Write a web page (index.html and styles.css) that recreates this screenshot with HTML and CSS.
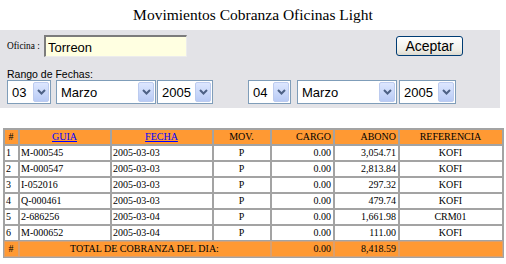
FILE: index.html
```html
<!DOCTYPE html>
<html>

<head>
    <title>Movimientos Cobranza Oficinas Light</title>
    <link rel="stylesheet" href="styles.css">
</head>

<body>
    <h1 class="title">Movimientos Cobranza Oficinas Light</h1>

    <form class="panel">
        <div class="row-oficina">
            <label class="lbl-oficina" for="oficina">Oficina :</label>
            <input class="txt-oficina" type="text" id="oficina" value="Torreon">
            <button class="btn-aceptar" type="button">Aceptar</button>
        </div>

        <div class="lbl-rango">Rango de Fechas:</div>
        <div class="row-fechas">
            <div class="sel sel-dia"><span>03</span><span class="arrow"><svg width="9" height="6" viewBox="0 0 9 6"><path d="M1 1 L4.5 4.5 L8 1" fill="none" stroke="#4d6185" stroke-width="2"/></svg></span></div>
            <div class="sel sel-mes"><span>Marzo</span><span class="arrow"><svg width="9" height="6" viewBox="0 0 9 6"><path d="M1 1 L4.5 4.5 L8 1" fill="none" stroke="#4d6185" stroke-width="2"/></svg></span></div>
            <div class="sel sel-anio"><span>2005</span><span class="arrow"><svg width="9" height="6" viewBox="0 0 9 6"><path d="M1 1 L4.5 4.5 L8 1" fill="none" stroke="#4d6185" stroke-width="2"/></svg></span></div>

            <div class="sel sel-dia sel-hasta"><span>04</span><span class="arrow"><svg width="9" height="6" viewBox="0 0 9 6"><path d="M1 1 L4.5 4.5 L8 1" fill="none" stroke="#4d6185" stroke-width="2"/></svg></span></div>
            <div class="sel sel-mes"><span>Marzo</span><span class="arrow"><svg width="9" height="6" viewBox="0 0 9 6"><path d="M1 1 L4.5 4.5 L8 1" fill="none" stroke="#4d6185" stroke-width="2"/></svg></span></div>
            <div class="sel sel-anio sel-last"><span>2005</span><span class="arrow"><svg width="9" height="6" viewBox="0 0 9 6"><path d="M1 1 L4.5 4.5 L8 1" fill="none" stroke="#4d6185" stroke-width="2"/></svg></span></div>
        </div>
    </form>

    <table class="movs">
        <colgroup>
            <col class="w-num">
            <col class="w-guia">
            <col class="w-fecha">
            <col class="w-mov">
            <col class="w-cargo">
            <col class="w-abono">
            <col class="w-ref">
        </colgroup>
        <tr class="head">
            <td class="c">#</td>
            <td class="c"><a href="#">GUIA</a></td>
            <td class="c"><a href="#">FECHA</a></td>
            <td class="c">MOV.</td>
            <td class="r">CARGO</td>
            <td class="r">ABONO</td>
            <td class="c">REFERENCIA</td>
        </tr>
        <tr>
            <td>1</td><td>M-000545</td><td>2005-03-03</td><td class="c">P</td><td class="r">0.00</td><td class="r">3,054.71</td><td class="c">KOFI</td>
        </tr>
        <tr>
            <td>2</td><td>M-000547</td><td>2005-03-03</td><td class="c">P</td><td class="r">0.00</td><td class="r">2,813.84</td><td class="c">KOFI</td>
        </tr>
        <tr>
            <td>3</td><td>I-052016</td><td>2005-03-03</td><td class="c">P</td><td class="r">0.00</td><td class="r">297.32</td><td class="c">KOFI</td>
        </tr>
        <tr>
            <td>4</td><td>Q-000461</td><td>2005-03-03</td><td class="c">P</td><td class="r">0.00</td><td class="r">479.74</td><td class="c">KOFI</td>
        </tr>
        <tr>
            <td>5</td><td>2-686256</td><td>2005-03-04</td><td class="c">P</td><td class="r">0.00</td><td class="r">1,661.98</td><td class="c">CRM01</td>
        </tr>
        <tr>
            <td>6</td><td>M-000652</td><td>2005-03-04</td><td class="c">P</td><td class="r">0.00</td><td class="r">111.00</td><td class="c">KOFI</td>
        </tr>
        <tr class="total">
            <td class="c">#</td>
            <td class="c" colspan="3">TOTAL DE COBRANZA DEL DIA:</td>
            <td class="r">0.00</td>
            <td class="r">8,418.59</td>
            <td></td>
        </tr>
    </table>
</body>

</html>
```

FILE: styles.css
```css
* {
    margin: 0;
    padding: 0;
    box-sizing: border-box;
}

body {
    width: 506px;
    background: white;
    font-family: 'Liberation Serif', 'Times New Roman', serif;
    color: black;
}

.title {
    font-size: 15.5px;
    font-weight: normal;
    text-align: center;
    line-height: 20px;
    padding-top: 5px;
    margin-bottom: 5px;
}

/* gray filter box */
.panel {
    width: 500px;
    background: #e3e3e7;
    padding: 5px 0 4px 7px;
}

.row-oficina {
    display: flex;
    align-items: center;
    height: 22px;
}

.lbl-oficina {
    font-size: 9.3px;
    width: 37px;
}

.txt-oficina {
    width: 143px;
    height: 22px;
    background: #ffffe1;
    border-top: 2px solid #7c7c7c;
    border-left: 2px solid #7c7c7c;
    border-right: 1px solid #ececec;
    border-bottom: 1px solid #ececec;
    outline: none;
    font-family: 'Liberation Sans', Arial, sans-serif;
    font-size: 13px;
    padding-left: 2px;
    padding-top: 1px;
}

.btn-aceptar {
    margin-left: auto;
    margin-right: 37px;
    width: 67px;
    height: 20px;
    border: 1px solid #003c74;
    border-radius: 3px;
    background: linear-gradient(#ffffff, #f0efe8 70%, #dcdad0);
    font-family: 'Liberation Sans', Arial, sans-serif;
    font-size: 14px;
    color: black;
}

.lbl-rango {
    font-family: 'Liberation Sans', Arial, sans-serif;
    font-size: 10.5px;
    line-height: 12px;
    margin-top: 11px;
}

.row-fechas {
    display: flex;
}

.sel {
    display: flex;
    align-items: center;
    justify-content: space-between;
    height: 24px;
    background: white;
    border: 1px solid #7f9db9;
    padding: 1px 1px 1px 4px;
    font-family: 'Liberation Sans', Arial, sans-serif;
    font-size: 13px;
}

.sel-dia {
    width: 44px;
    margin-right: 5px;
}

.sel-mes {
    width: 100px;
    margin-right: 1px;
}

.sel-anio {
    width: 56px;
    margin-right: 35px;
}

.sel-hasta {
    width: 43px;
    margin-right: 6px;
}

.sel-last {
    width: 57px;
    margin-left: 1px;
}

.arrow {
    display: flex;
    align-items: center;
    justify-content: center;
    width: 16px;
    height: 100%;
    background: linear-gradient(#dde7ff, #b9cbf5);
    border: 1px solid #bccbef;
    border-radius: 2px;
}

/* movimientos table */
.movs {
    margin-top: 20px;
    margin-left: 3px;
    width: 499px;
    table-layout: fixed;
    border-collapse: separate;
    border-spacing: 0;
    border: 1px solid #a3a3a3;
    font-size: 10px;
}

.w-num { width: 15px; }
.w-guia { width: 92px; }
.w-fecha { width: 102px; }
.w-mov { width: 58px; }
.w-cargo { width: 63px; }
.w-abono { width: 65px; }
.w-ref { width: 104px; }

.movs td {
    border: 1px solid #a3a3a3;
    line-height: 14px;
    height: 16px;
    padding: 0 2px 0 1px;
    white-space: nowrap;
    overflow: hidden;
}

.movs .head td,
.movs .total td {
    background: #ff9933;
}

.movs .total td {
    border-color: #d9a070;
}

.movs a {
    color: #0000ff;
}

.c {
    text-align: center;
}

.r {
    text-align: right;
}
```
